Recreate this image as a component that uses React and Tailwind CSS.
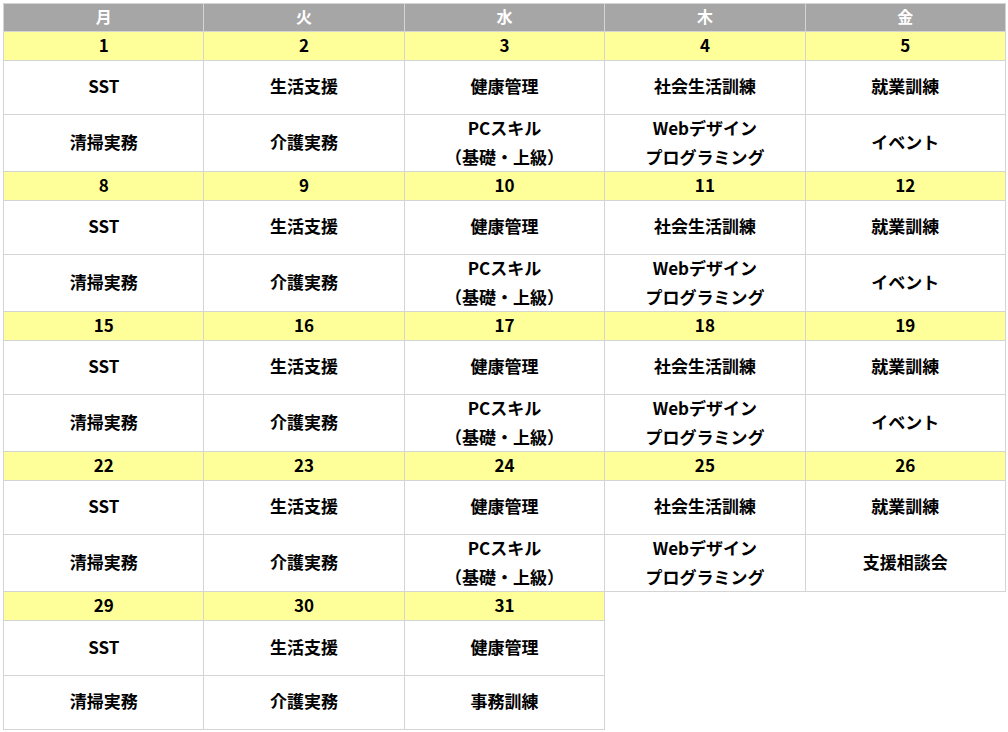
import React from "react";

const days = ["月", "火", "水", "木", "金"];

const weeks = [
  { dates: [1, 2, 3, 4, 5], last: "イベント" },
  { dates: [8, 9, 10, 11, 12], last: "イベント" },
  { dates: [15, 16, 17, 18, 19], last: "イベント" },
  { dates: [22, 23, 24, 25, 26], last: "支援相談会" },
];

const row1 = ["SST", "生活支援", "健康管理", "社会生活訓練", "就業訓練"];

function Cell({ children, className = "" }) {
  return (
    <div
      className={
        "flex flex-col items-center justify-center border-r border-b border-[#d4d4d4] text-center pb-[3px] " +
        className
      }
    >
      {children}
    </div>
  );
}

function Two({ a, b }) {
  return (
    <div className="leading-[29px]">
      <div>{a}</div>
      <div>{b}</div>
    </div>
  );
}

export default function App() {
  return (
    <div className="w-[1008px] h-[732px] bg-white pt-[3px] pl-[3px]">
      <div
        className="grid grid-cols-5 w-[1003px] border-t border-l border-[#d4d4d4] font-bold text-[17px] text-black"
        style={{ fontFamily: '"Noto Sans CJK JP", "Noto Sans", sans-serif' }}
      >
        {days.map((d) => (
          <Cell key={d} className="h-[28px] bg-[#a6a6a6] text-white text-[16px]">
            {d}
          </Cell>
        ))}
        {weeks.map((w, wi) => (
          <React.Fragment key={wi}>
            {w.dates.map((n) => (
              <Cell key={"d" + n} className="h-[29px] bg-[#ffff99]">
                {n}
              </Cell>
            ))}
            {row1.map((t, i) => (
              <Cell key={"a" + i} className="h-[54px]">
                {t}
              </Cell>
            ))}
            <Cell className="h-[57px]">清掃実務</Cell>
            <Cell className="h-[57px]">介護実務</Cell>
            <Cell className="h-[57px]">
              <Two a="PCスキル" b="（基礎・上級）" />
            </Cell>
            <Cell className="h-[57px]">
              <Two a="Webデザイン" b="プログラミング" />
            </Cell>
            <Cell className="h-[57px]">{w.last}</Cell>
          </React.Fragment>
        ))}
        {[29, 30, 31].map((n) => (
          <Cell key={"d" + n} className="h-[29px] bg-[#ffff99]">
            {n}
          </Cell>
        ))}
        <div className="col-span-2" />
        <Cell className="h-[55px]">SST</Cell>
        <Cell className="h-[55px]">生活支援</Cell>
        <Cell className="h-[55px]">健康管理</Cell>
        <div className="col-span-2" />
        <Cell className="h-[54px]">清掃実務</Cell>
        <Cell className="h-[54px]">介護実務</Cell>
        <Cell className="h-[54px]">事務訓練</Cell>
        <div className="col-span-2" />
      </div>
    </div>
  );
}
